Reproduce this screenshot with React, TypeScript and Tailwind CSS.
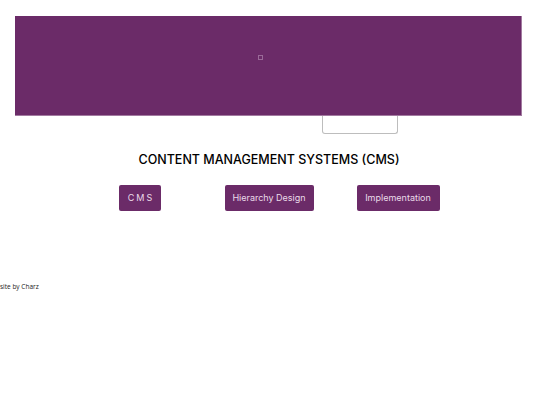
export default function App() {
  return (
    <div className="w-[540px] h-[405px] bg-white overflow-hidden" style={{ fontFamily: "Inter, 'Noto Sans', sans-serif" }}>
      <div className="pt-4 pl-[15px]">
        <div className="w-[507px] h-[100px] bg-[#6b2b68] border-b border-r border-[#a27aa0] flex items-center justify-center">
          <div className="w-[5px] h-[5px] border border-[#9a6a98] -mt-[17px] -ml-[16px]" />
        </div>
        <div className="ml-[307px] w-[76px] h-[18px] border border-t-0 border-[#bdbdbd] rounded-b-[3px]" />
      </div>
      <h1 className="mt-[18px] text-center text-[12.5px] font-medium text-black leading-[16px] -ml-[2px]">
        CONTENT MANAGEMENT SYSTEMS (CMS)
      </h1>
      <div className="mt-[17px] flex justify-center -ml-[2px]">
        <div className="w-[129px] flex justify-center">
          <button className="w-[42px] h-[26px] bg-[#6b2b68] rounded-[2px] text-[#eadbe9] text-[9px] tracking-[2px] pl-[2px]">CMS</button>
        </div>
        <div className="w-[129px] flex justify-center">
          <button className="w-[89px] h-[26px] bg-[#6b2b68] rounded-[2px] text-[#eadbe9] text-[9px]">Hierarchy Design</button>
        </div>
        <div className="w-[129px] flex justify-center">
          <button className="w-[83px] h-[26px] bg-[#6b2b68] rounded-[2px] text-[#eadbe9] text-[9px]">Implementation</button>
        </div>
      </div>
      <div className="mt-[71px] text-[6.5px] leading-[9px] text-[#222]" style={{ fontFamily: "'Open Sans', sans-serif" }}>
        site by Charz
      </div>
    </div>
  );
}
